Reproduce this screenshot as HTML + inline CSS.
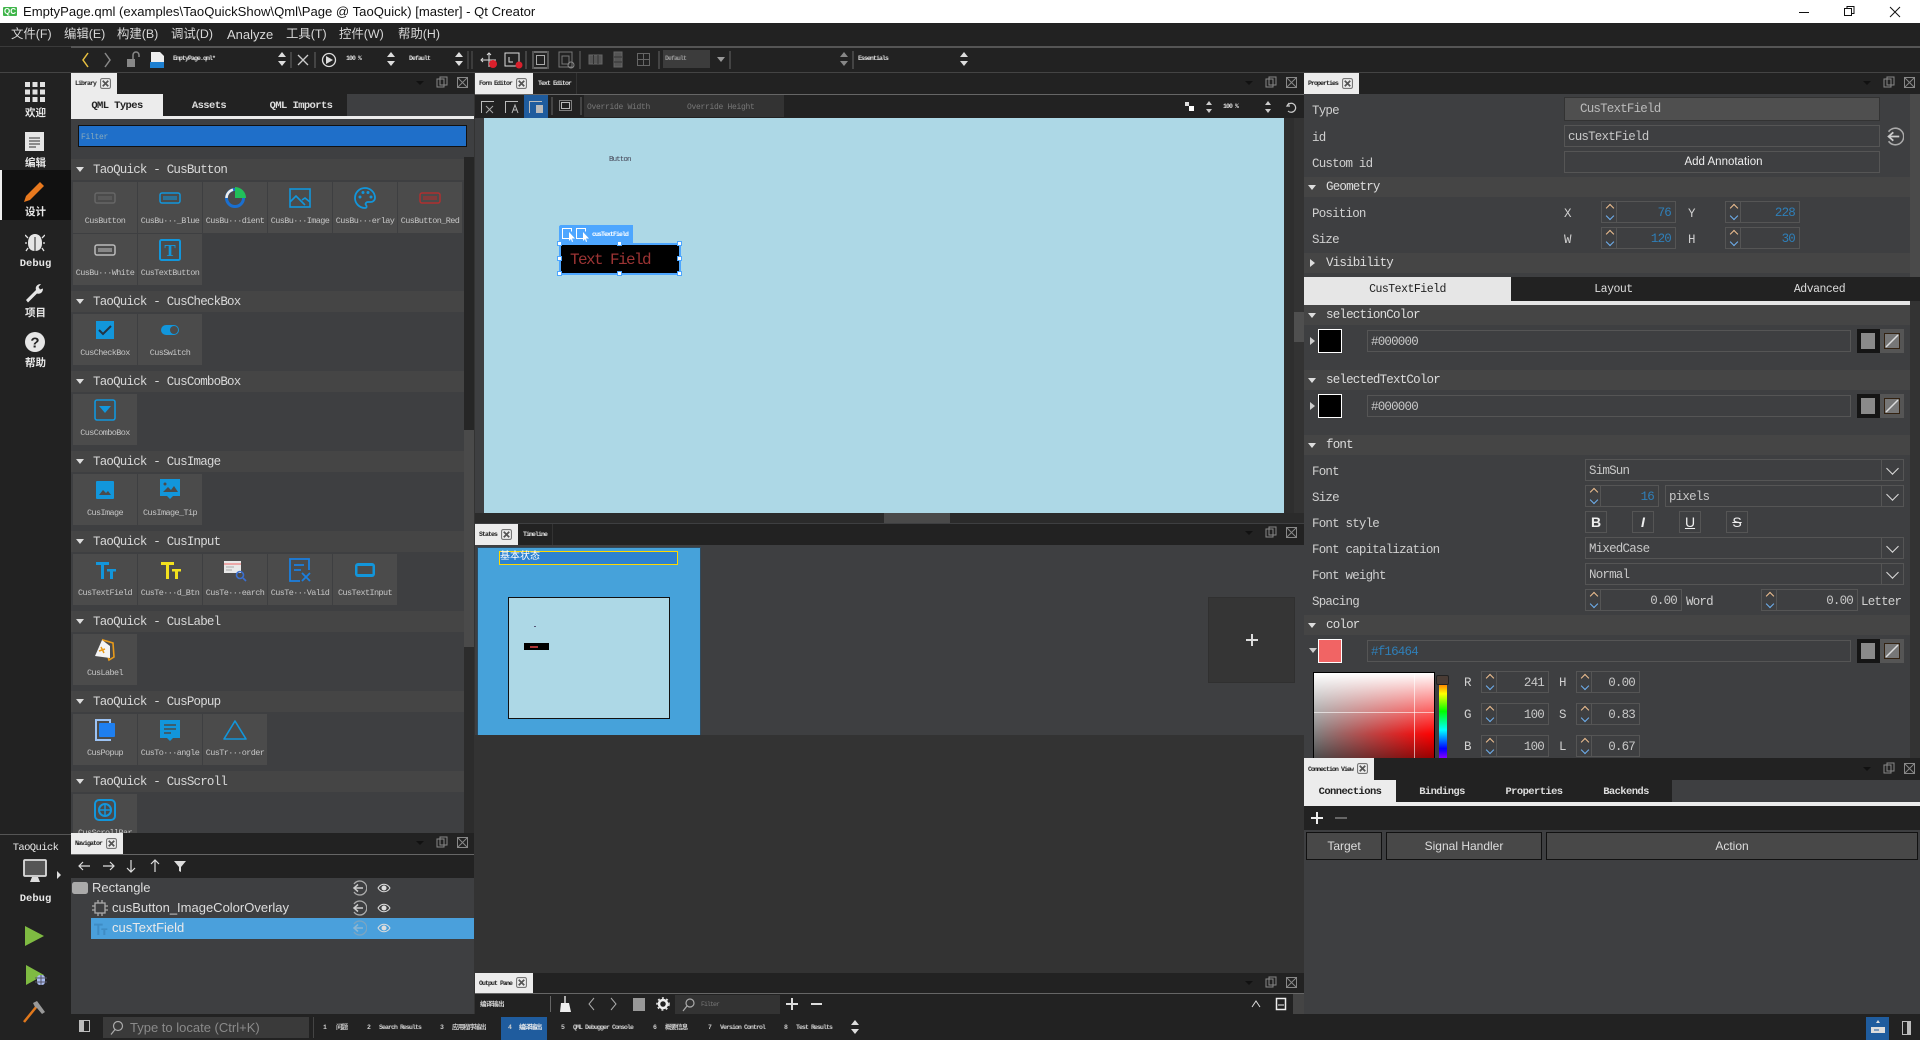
<!DOCTYPE html>
<html lang="en"><head><meta charset="utf-8"><title>EmptyPage.qml - Qt Creator</title>
<style>
html,body{margin:0;padding:0;width:1920px;height:1040px;overflow:hidden;background:#3e3f41}
body{position:relative;font-family:"Liberation Sans","Noto Sans CJK SC",sans-serif;color:#ddd}
div,span,svg,b,i{box-sizing:border-box}
.a{position:absolute;display:block}
.t{position:absolute;white-space:nowrap}
.m{font-family:"Liberation Mono","Noto Serif CJK SC",monospace}
.tab{position:absolute;background:#ececec;color:#222;font:bold 6.5px/22px "Liberation Mono","Noto Sans CJK SC",monospace;letter-spacing:-.9px;padding-left:4px;white-space:nowrap;overflow:hidden}
.tiny{position:absolute;color:#ddd;font:bold 6.5px/12px "Liberation Mono","Noto Sans CJK SC",monospace;letter-spacing:-.9px;white-space:nowrap}
.h{position:absolute;left:71px;width:393px;height:21px;background:#454545;color:#d8d8d8;font:12.5px/22px "Liberation Mono",monospace;letter-spacing:-.8px;padding-left:22px;white-space:nowrap}
.h:before,.p:before{content:"";position:absolute;left:5px;top:8px;border:4px solid transparent;border-top:5px solid #ddd;border-bottom:0;width:0;height:0}
.p{position:absolute;left:1304px;width:606px;height:20px;background:#454545;color:#ddd;font:12.5px/21px "Liberation Mono",monospace;letter-spacing:-.8px;padding-left:22px;white-space:nowrap}
.p:before{left:4px;top:8px}
.p.cl:before{border:4px solid transparent;border-left:5px solid #ddd;border-right:0;top:6px;left:6px}
.c{position:absolute;width:64px;height:51px;background:#4b4b4b;overflow:hidden}
.c svg{position:absolute;left:20px;top:4px;width:24px;height:24px}
.c b{position:absolute;left:-4px;right:-4px;top:33px;text-align:center;font:normal 8.5px/12px "Liberation Mono",monospace;letter-spacing:-.6px;color:#c6c6c6;white-space:nowrap}
.l{position:absolute;left:1312px;margin-top:1px;font:12.5px/16px "Liberation Mono",monospace;letter-spacing:-.8px;color:#d0d0d0;white-space:nowrap}
.f{position:absolute;border:1px solid #555;font:12.5px/22px "Liberation Mono",monospace;letter-spacing:-.8px;color:#c8c8c8;padding-left:3px;white-space:nowrap}
.sp{position:absolute;border:1px solid #555;height:22px;font:12.5px/22px "Liberation Mono",monospace;letter-spacing:-.8px;color:#c8c8c8;text-align:right;padding-right:4px}
.sp i{position:absolute;left:0;top:0;width:15px;height:20px;border-right:1px solid #555}
.sp i:before,.sp i:after{content:"";position:absolute;left:5px;width:5px;height:5px;transform:rotate(45deg)}
.sp i:before{top:3px;border-left:1px solid #f0c090;border-top:1px solid #f0c090}
.sp i:after{top:11px;border-right:1px solid #6fb0f0;border-bottom:1px solid #6fb0f0}
.bl{color:#2f7fb8}
.cb:after{content:"";position:absolute;right:21px;top:0;height:20px;border-left:1px solid #555}
.cb:before{content:"";position:absolute;right:6px;top:4px;width:8px;height:8px;border-right:1px solid #ddd;border-bottom:1px solid #ddd;transform:rotate(45deg)}
.btn{position:absolute;background:#484848;border:1px solid #111;color:#ddd;text-align:center;font:12px/26px "Liberation Sans",sans-serif}
.sw{position:absolute;left:1318px;width:24px;height:24px;border:1px solid #fff;background:#000}
.bb{position:absolute;left:1857px;width:23px;height:24px;background:#151515}
.bb:before{content:"";position:absolute;left:4px;top:4px;width:14px;height:16px;background:#8a8a8a}
.bs{position:absolute;left:1880px;width:24px;height:24px;background:#555}
.bs svg{position:absolute;left:4px;top:4px}
.fs{position:absolute;top:511px;width:22px;height:22px;border:1px solid #555;text-align:center;font:bold 14px/20px "Liberation Sans",sans-serif;color:#eee}
.vs{position:absolute;width:1px;background:#555}
.menu{position:absolute;top:25px;font-size:12.4px;line-height:19px;color:#d8d8d8;white-space:nowrap}
.side{position:absolute;left:0;width:71px;text-align:center;color:#e8e8e8;font:bold 10.5px/13px "Liberation Mono","Noto Sans CJK SC",monospace}
.tb{position:absolute;top:94px;height:22px;font:bold 10.5px/24px "Liberation Mono",monospace;letter-spacing:-.6px;text-align:center;color:#ddd;background:#222}
.st{position:absolute;top:1023px;color:#ccc;font:bold 6.5px/10px "Liberation Mono","Noto Sans CJK SC",monospace;letter-spacing:-.9px;white-space:nowrap}
.hd{position:absolute;width:5px;height:5px;background:#fff;border:1px solid #4da6ff}
</style></head>
<body>
<svg width="0" height="0" style="position:absolute">
<defs>
<symbol id="x" viewBox="0 0 10 10"><rect x=".5" y=".5" width="9" height="9" rx="1.5" fill="none" stroke="#777"/><path d="M2.5 2.5l5 5M7.5 2.5l-5 5" stroke="#555" stroke-width="1.6"/></symbol>
<symbol id="pc" viewBox="0 0 52 14"><path d="M0 5h8l-4 4z" fill="#111"/><rect x="21" y="3" width="7" height="8" fill="none" stroke="#888"/><rect x="24" y="1" width="7" height="8" fill="none" stroke="#888"/><rect x="41.500" y="1.500" width="10" height="10" fill="none" stroke="#888"/><path d="M42 2l9 9M51 2l-9 9" stroke="#888"/></symbol>
<symbol id="ud" viewBox="0 0 10 14"><path d="M5 0l4 5H1zM5 14l4-5H1z" fill="#ddd"/></symbol>
<symbol id="eye" viewBox="0 0 14 10"><path d="M1 5c3-5 9-5 12 0-3 5-9 5-12 0z" fill="none" stroke="#ddd"/><circle cx="7" cy="5" r="2.500" fill="#ddd"/></symbol>
<symbol id="bk" viewBox="0 0 16 16"><path d="M3 4a7 7 0 1 1 0 8" fill="none" stroke="#aaa" stroke-width="1.300"/><path d="M12 8H3M7 4.500L3 8l4 3.500" fill="none" stroke="#ccc" stroke-width="1.500"/></symbol>
<symbol id="btn" viewBox="0 0 24 24"><rect x="2" y="7" width="20" height="10" rx="2" fill="none" stroke="currentColor" stroke-width="1.500"/><rect x="5" y="10" width="14" height="4" fill="currentColor" opacity=".55"/></symbol>
<symbol id="tt" viewBox="0 0 24 24"><path d="M3 4h13v3h-5v14H8V7H3zM14 11h9v2.500h-3V21h-3v-7.500h-3z" fill="currentColor"/></symbol>
</defs></svg>

<!-- title bar -->
<div class="a" style="left:0;top:0;width:1920px;height:23px;background:#fff"></div>
<div class="a" style="left:3px;top:7px;width:14px;height:9px;background:#3fb54a;border-radius:1px;color:#fff;font:bold 8px/9px 'Liberation Sans',sans-serif;text-align:center">QC</div>
<div class="t" style="left:23px;top:3px;font-size:13.1px;line-height:17px;color:#111">EmptyPage.qml (examples\TaoQuickShow\Qml\Page @ TaoQuick) [master] - Qt Creator</div>
<svg class="a" style="left:1795px;top:4px" width="115" height="16"><path d="M4 8.500h10" stroke="#111"/><rect x="49.500" y="4.500" width="7" height="7" fill="#fff" stroke="#111"/><path d="M52 4V2.500h7v7h-2" fill="none" stroke="#111"/><path d="M95 3l10 10M105 3l-10 10" stroke="#111"/></svg>

<!-- menu -->
<div class="a" style="left:0;top:23px;width:1920px;height:49px;background:#222"></div>
<span class="menu" style="left:11px">文件(F)</span><span class="menu" style="left:64px">编辑(E)</span><span class="menu" style="left:117px">构建(B)</span><span class="menu" style="left:171px">调试(D)</span><span class="menu" style="left:227px;font-size:13px">Analyze</span><span class="menu" style="left:286px">工具(T)</span><span class="menu" style="left:339px">控件(W)</span><span class="menu" style="left:398px">帮助(H)</span>
<div class="a" style="left:71px;top:46px;width:1849px;height:2px;background:#555"></div>
<div class="a" style="left:0;top:46px;width:71px;height:1px;background:#3a3a3a"></div>

<!-- main toolbar -->
<svg class="a" style="left:71px;top:48px" width="900" height="24" fill="none">
<path d="M17 5l-5 7 5 7" stroke="#e8c040" stroke-width="1.500"/><path d="M34 5l5 7-5 7" stroke="#888" stroke-width="1.500"/>
<rect x="56" y="11" width="8" height="8" fill="#888"/><path d="M62 11V7a3 3 0 0 1 6 0v2" stroke="#888" stroke-width="1.500"/>
<path d="M80 4h9l4 4v8H80z" fill="#eee"/><rect x="79" y="14" width="14" height="6" fill="#1d7fd0"/>
<path d="M220 4v16M244 4v16" stroke="#666"/><path d="M227 7l10 10M237 7l-10 10" stroke="#ccc" stroke-width="1.300"/>
<circle cx="258" cy="12" r="6.500" stroke="#ddd" stroke-width="1.300"/><path d="M255 8l7 4-7 4z" fill="#ddd"/>
<path d="M397 3v18M401 3v18" stroke="#555"/>
<path d="M411 12h14M418 5v14M412 10l-2 2 2 2M416 7l2-2 2 2" stroke="#ddd"/><circle cx="422" cy="16" r="4" fill="#d9202c"/>
<path d="M434 5h14v13h-14z" stroke="#ddd"/><path d="M438 9v5h4" stroke="#ddd"/><circle cx="448" cy="17" r="3.500" fill="#d9202c"/>
<path d="M455 3v18" stroke="#666"/><path d="M463 4h13M463 20h13" stroke="#bbb"/><rect x="465.500" y="7.500" width="8" height="9" stroke="#aaa"/><path d="M462 3v18M477 3v18" stroke="#888"/>
<rect x="488" y="4" width="13" height="15" stroke="#777"/><rect x="491" y="8" width="7" height="8" stroke="#777"/><circle cx="500" cy="17" r="3" stroke="#888"/>
<path d="M509 3v18" stroke="#666"/>
<rect x="518" y="7" width="13" height="9" stroke="#666" fill="#555"/><path d="M522.500 7v9M527 7v9" stroke="#333"/>
<rect x="543" y="4" width="8" height="15" stroke="#666" fill="#555"/><path d="M543 9h8M543 14h8" stroke="#333"/>
<rect x="566.500" y="5.500" width="12" height="12" stroke="#666"/><path d="M566.500 11.500h12M572.500 5.500v12" stroke="#666"/>
<path d="M588 3v18M659 3v18M782 3v18M901 3v18" stroke="#666"/>
</svg>
<div class="a" style="left:663px;top:50px;width:47px;height:18px;background:#3c3c3c"></div>
<div class="a" style="left:717px;top:57px;border:4px solid transparent;border-top:5px solid #999;border-bottom:0"></div>
<div class="tiny" style="left:173px;top:53px">EmptyPage.qml*</div>
<div class="tiny" style="left:346px;top:53px">100 %</div>
<div class="tiny" style="left:409px;top:53px">Default</div>
<div class="tiny" style="left:665px;top:53px;color:#999">Default</div>
<div class="tiny" style="left:858px;top:53px">Essentials</div>
<svg class="a" style="left:277px;top:52px" width="10" height="14"><use href="#ud"/></svg>
<svg class="a" style="left:386px;top:52px" width="10" height="14"><use href="#ud"/></svg>
<svg class="a" style="left:454px;top:52px" width="10" height="14"><use href="#ud"/></svg>
<svg class="a" style="left:839px;top:52px;opacity:.55" width="10" height="14"><use href="#ud"/></svg>
<svg class="a" style="left:959px;top:52px" width="10" height="14"><use href="#ud"/></svg>

<!-- bars under toolbar -->
<div class="a" style="left:0;top:72px;width:1920px;height:1px;background:#444"></div>
<div class="a" style="left:71px;top:73px;width:1849px;height:21px;background:#222"></div>

<!-- left sidebar -->
<div class="a" style="left:0;top:73px;width:71px;height:967px;background:#222"></div>
<div class="a" style="left:0;top:170px;width:71px;height:50px;background:#111"></div>
<div class="a" style="left:0;top:170px;width:2px;height:50px;background:#eee"></div>
<svg class="a" style="left:25px;top:82px" width="20" height="20" fill="#e2e2e2"><rect width="5" height="5"/><rect x="7.500" width="5" height="5"/><rect x="15" width="5" height="5"/><rect y="7.500" width="5" height="5"/><rect x="7.500" y="7.500" width="5" height="5"/><rect x="15" y="7.500" width="5" height="5"/><rect y="15" width="5" height="5"/><rect x="7.500" y="15" width="5" height="5"/><rect x="15" y="15" width="5" height="5"/></svg>
<div class="side" style="top:106px;margin-top:2px">欢迎</div>
<svg class="a" style="left:25px;top:132px" width="20" height="20"><rect width="19" height="19" fill="#e6e6e6"/><path d="M4 6h11M4 9h11M4 12h11M4 15h7" stroke="#333"/></svg>
<div class="side" style="top:156px;margin-top:2px">编辑</div>
<svg class="a" style="left:23px;top:181px" width="22" height="22"><path d="M17 1l4 4L7 19l-6 2 2-6z" fill="#e8791e"/></svg>
<div class="side" style="top:206px;margin-top:1px">设计</div>
<svg class="a" style="left:25px;top:232px" width="20" height="20"><path d="M10 2c4 0 7 3 7 9s-3 8-7 8-7-2-7-8 3-9 7-9z" fill="#e6e6e6"/><path d="M10 2v17M3 6L0 3M17 6l3-3M2 11H0M18 11h2M3 16l-2 3M17 16l2 3" stroke="#e6e6e6" stroke-width="1.300"/><path d="M10 5v14" stroke="#222"/></svg>
<div class="side" style="top:256px;margin-top:2px">Debug</div>
<svg class="a" style="left:25px;top:283px" width="20" height="20"><path d="M1 17l10-10c-1-3 1-6 5-6l-2.500 3 1.500 2.500 3-1c0 4-3 6-6 5L3 19.500z" fill="#e6e6e6"/></svg>
<div class="side" style="top:306px;margin-top:2px">项目</div>
<svg class="a" style="left:25px;top:332px" width="20" height="20"><circle cx="10" cy="10" r="10" fill="#e6e6e6"/><text x="10" y="15.500" text-anchor="middle" font-family="Liberation Sans" font-weight="bold" font-size="15" fill="#222">?</text></svg>
<div class="side" style="top:356px;margin-top:2px">帮助</div>
<div class="a" style="left:0;top:834px;width:71px;height:1px;background:#555"></div>
<div class="side" style="top:842px;font-weight:normal;font-size:10.5px;letter-spacing:-.6px">TaoQuick</div>
<svg class="a" style="left:23px;top:859px" width="40" height="26"><rect x="1" y="1" width="22" height="16" rx="1" fill="#555" stroke="#ddd" stroke-width="1.800"/><path d="M9 18h6l2 5H7z" fill="#ddd"/><path d="M34 12l4 4-4 4z" fill="#ddd"/></svg>
<div class="side" style="top:893px">Debug</div>
<svg class="a" style="left:24px;top:925px" width="22" height="22"><path d="M1 1l19 10L1 21z" fill="#7fbb42"/></svg>
<svg class="a" style="left:24px;top:964px" width="24" height="24"><path d="M2 1l18 10L2 21z" fill="#7fbb42"/><rect x="13" y="11" width="8" height="10" rx="3" fill="#aabbee"/><path d="M17 11v10M11 14h12M11 18h12" stroke="#556"/></svg>
<svg class="a" style="left:22px;top:1000px" width="24" height="24"><path d="M2 22L15 6" stroke="#e0781c" stroke-width="2.500"/><path d="M11 3l4-2 8 11-3 2-5-6-2-1z" fill="#999"/></svg>

<!-- library panel -->
<div class="tab" style="left:71px;top:73px;width:46px">Library</div>
<svg class="a" style="left:100px;top:78px" width="11" height="11"><use href="#x"/></svg>
<svg class="a" style="left:416px;top:76px" width="52" height="14"><use href="#pc"/></svg>
<div class="a" style="left:71px;top:94px;width:403px;height:739px;background:#3e3f41"></div>
<div class="tb" style="left:71px;width:92px;background:#ececec;color:#222">QML Types</div>
<div class="tb" style="left:163px;width:92px">Assets</div>
<div class="tb" style="left:255px;width:92px">QML Imports</div>
<div class="a" style="left:71px;top:116px;width:403px;height:3px;background:#ececec"></div>
<div class="a m" style="left:78px;top:125px;width:389px;height:22px;background:#1f6fc9;border:1px solid #111;font-size:8px;line-height:24px;letter-spacing:-.3px;color:#8ab;padding-left:2px">Filter</div>
<div class="a" style="left:464px;top:157px;width:10px;height:273px;background:#262626"></div>
<div class="a" style="left:464px;top:430px;width:10px;height:217px;background:#4a4a4a"></div>
<div class="a" style="left:464px;top:647px;width:10px;height:186px;background:#2c2c2c"></div>

<div class="h" style="top:159px">TaoQuick - CusButton</div>
<div class="c" style="left:73px;top:182px;color:#666"><svg><use href="#btn"/></svg><b>CusButton</b></div>
<div class="c" style="left:138px;top:182px;color:#1296db"><svg><use href="#btn"/></svg><b>CusBu···_Blue</b></div>
<div class="c" style="left:203px;top:182px"><svg viewBox="0 0 24 24"><circle cx="12" cy="12" r="8.500" fill="none" stroke="#1a6fd0" stroke-width="3"/><path d="M3.500 12A8.500 8.500 0 0 1 10 3.700" fill="none" stroke="#eee" stroke-width="2.500"/><path d="M12 1a11 11 0 0 1 11 11H12z" fill="#22c05a"/></svg><b>CusBu···dient</b></div>
<div class="c" style="left:268px;top:182px"><svg viewBox="0 0 24 24" fill="none" stroke="#1296db" stroke-width="1.600"><rect x="2" y="3" width="20" height="18"/><path d="M2 16l6-6 9 9M14 14l3-2 5 4"/></svg><b>CusBu···Image</b></div>
<div class="c" style="left:333px;top:182px"><svg viewBox="0 0 24 24"><path d="M12 2a10 10 0 1 0 0 20c2 0 2-2 1-3s0-3 2-3h3c2 0 4-2 4-4 0-6-5-10-10-10z" fill="none" stroke="#1296db" stroke-width="1.800"/><circle cx="7" cy="11" r="1.500" fill="#1296db"/><circle cx="10" cy="6.500" r="1.500" fill="#1296db"/><circle cx="15" cy="6.500" r="1.500" fill="#1296db"/><circle cx="18" cy="11" r="1.500" fill="#1296db"/></svg><b>CusBu···erlay</b></div>
<div class="c" style="left:398px;top:182px;color:#b03030"><svg><use href="#btn"/></svg><b>CusButton_Red</b></div>
<div class="c" style="left:73px;top:234px;color:#bbb"><svg><use href="#btn"/></svg><b>CusBu···White</b></div>
<div class="c" style="left:138px;top:234px"><svg viewBox="0 0 24 24"><rect x="2" y="2" width="20" height="20" rx="1.500" fill="none" stroke="#1296db" stroke-width="2"/><text x="12" y="18" text-anchor="middle" font-family="Liberation Serif" font-weight="bold" font-size="17" fill="#1296db">T</text></svg><b>CusTextButton</b></div>

<div class="h" style="top:291px">TaoQuick - CusCheckBox</div>
<div class="c" style="left:73px;top:314px"><svg viewBox="0 0 24 24"><rect x="3" y="3" width="18" height="18" fill="#1296db"/><path d="M6 12l4 4 8-8" fill="none" stroke="#234" stroke-width="2"/></svg><b>CusCheckBox</b></div>
<div class="c" style="left:138px;top:314px"><svg viewBox="0 0 24 24"><rect x="3" y="7" width="18" height="10" rx="5" fill="#1296db"/><circle cx="16" cy="12" r="4" fill="#4b4b4b"/></svg><b>CusSwitch</b></div>

<div class="h" style="top:371px">TaoQuick - CusComboBox</div>
<div class="c" style="left:73px;top:394px"><svg viewBox="0 0 24 24"><rect x="2" y="2" width="20" height="20" rx="2" fill="none" stroke="#1296db" stroke-width="1.600"/><path d="M6 8h12l-6 7z" fill="#1296db"/></svg><b>CusComboBox</b></div>

<div class="h" style="top:451px">TaoQuick - CusImage</div>
<div class="c" style="left:73px;top:474px"><svg viewBox="0 0 24 24"><rect x="3" y="3" width="18" height="18" rx="1" fill="#1296db"/><path d="M6 17l4-5 3 3 2-2 3 4z" fill="#4b4b4b"/></svg><b>CusImage</b></div>
<div class="c" style="left:138px;top:474px"><svg viewBox="0 0 24 24"><path d="M2 1h20v17h-7l-3 3-3-3H2z" fill="#1296db"/><path d="M5 14l5-5 3 3 3-4 4 6z" fill="#4b4b4b"/><circle cx="7" cy="6" r="1.500" fill="#4b4b4b"/></svg><b>CusImage_Tip</b></div>

<div class="h" style="top:531px">TaoQuick - CusInput</div>
<div class="c" style="left:73px;top:554px;color:#1296db"><svg><use href="#tt"/></svg><b>CusTextField</b></div>
<div class="c" style="left:138px;top:554px;color:#f2e01e"><svg><use href="#tt"/></svg><b>CusTe···d_Btn</b></div>
<div class="c" style="left:203px;top:554px"><svg viewBox="0 0 24 24"><rect x="1" y="3" width="17" height="12" fill="#e8e8e8"/><path d="M1 6h17" stroke="#e66"/><path d="M3 9h8M3 12h6" stroke="#aaa"/><circle cx="17" cy="17" r="3.500" fill="none" stroke="#3a6fd0" stroke-width="1.600"/><path d="M20 20l3 3" stroke="#3a6fd0" stroke-width="1.600"/></svg><b>CusTe···earch</b></div>
<div class="c" style="left:268px;top:554px"><svg viewBox="0 0 24 24" fill="none" stroke="#1a7fe0" stroke-width="1.800"><path d="M21 12V1H2v22h10"/><path d="M6 7h10M6 12h7"/><path d="M14 15l8 8M22 15l-8 8"/></svg><b>CusTe···Valid</b></div>
<div class="c" style="left:333px;top:554px"><svg viewBox="0 0 24 24"><rect x="2" y="5" width="20" height="14" rx="3" fill="#1296db"/><rect x="4.500" y="8" width="15" height="8" fill="#4b4b4b"/></svg><b>CusTextInput</b></div>

<div class="h" style="top:611px">TaoQuick - CusLabel</div>
<div class="c" style="left:73px;top:634px"><svg viewBox="0 0 24 24"><path d="M10 2l10 3 1 14-5 3z" fill="none" stroke="#e89a1a" stroke-width="1.600"/><path d="M9 2l8 6v12L2 18z" fill="#f4f4f4"/><path d="M6 13l6-2M8 9l3 6" stroke="#e89a1a" stroke-width="1.500"/></svg><b>CusLabel</b></div>

<div class="h" style="top:691px">TaoQuick - CusPopup</div>
<div class="c" style="left:73px;top:714px"><svg viewBox="0 0 24 24"><path d="M17 5V2H3v20h15" fill="none" stroke="#9cc3f5" stroke-width="2"/><rect x="6" y="5" width="16" height="14" rx="1" fill="#1e7ff0"/></svg><b>CusPopup</b></div>
<div class="c" style="left:138px;top:714px"><svg viewBox="0 0 24 24"><path d="M2 2h20v18h-7l-3 3-3-3H2z" fill="#1296db"/><path d="M6 7h12M6 11h12M6 15h7" stroke="#4b4b4b" stroke-width="1.600"/></svg><b>CusTo···angle</b></div>
<div class="c" style="left:203px;top:714px"><svg viewBox="0 0 24 24"><path d="M12 3L23 21H1z" fill="none" stroke="#1296db" stroke-width="1.600" stroke-linejoin="round"/></svg><b>CusTr···order</b></div>

<div class="h" style="top:771px">TaoQuick - CusScroll</div>
<div class="a" style="left:71px;top:794px;width:393px;height:39px;overflow:hidden"><div class="c" style="left:2px;top:0"><svg viewBox="0 0 24 24"><rect x="2" y="2" width="20" height="20" rx="4" fill="none" stroke="#1296db" stroke-width="2"/><circle cx="12" cy="12" r="6" fill="none" stroke="#1296db" stroke-width="2"/><path d="M12 6v12M6 12h12" stroke="#1296db" stroke-width="1.500"/></svg><b>CusScrollBar</b></div></div>

<!-- navigator -->
<div class="a" style="left:71px;top:833px;width:403px;height:21px;background:#222"></div>
<div class="tab" style="left:71px;top:833px;width:52px">Navigator</div>
<svg class="a" style="left:106px;top:838px" width="11" height="11"><use href="#x"/></svg>
<svg class="a" style="left:416px;top:836px" width="52" height="14"><use href="#pc"/></svg>
<div class="a" style="left:71px;top:854px;width:403px;height:1px;background:#666"></div>
<div class="a" style="left:71px;top:855px;width:403px;height:23px;background:#222"></div>
<svg class="a" style="left:71px;top:857px" width="130" height="20" fill="none" stroke="#ddd" stroke-width="1.200"><path d="M19 9H8M12 5L8 9l4 4M32 9h11M39 5l4 4-4 4M60 3v12M56 11l4 4 4-4M84 15V3M80 7l4-4 4 4"/><path d="M103 4h12l-5 6v5l-2-1v-4z" fill="#ddd" stroke="none"/></svg>
<svg class="a" style="left:72px;top:882px" width="17" height="12"><rect width="16" height="12" rx="2.500" fill="#aaa"/></svg>
<div class="t" style="left:92px;top:879px;font-size:13px;line-height:18px;color:#ddd">Rectangle</div>
<svg class="a" style="left:92px;top:900px" width="16" height="16" fill="none" stroke="#aaa" stroke-width="1.300"><rect x="3" y="3" width="10" height="10"/><path d="M6 0v3M10 0v3M6 13v3M10 13v3M0 6h3M0 10h3M13 6h3M13 10h3"/></svg>
<div class="t" style="left:112px;top:899px;font-size:13px;line-height:18px;color:#ddd">cusButton_ImageColorOverlay</div>
<div class="a" style="left:91px;top:918px;width:383px;height:21px;background:#4aa0dc"></div>
<svg class="a" style="left:92px;top:921px;color:#3f8cc4" width="16" height="16"><use href="#tt"/></svg>
<div class="t" style="left:112px;top:919px;font-size:13px;line-height:18px;color:#eaeaea">cusTextField</div>
<svg class="a" style="left:351px;top:880px" width="16" height="16"><use href="#bk"/></svg><svg class="a" style="left:351px;top:900px" width="16" height="16"><use href="#bk"/></svg><svg class="a" style="left:351px;top:920px;opacity:.5" width="16" height="16"><use href="#bk"/></svg>
<svg class="a" style="left:377px;top:883px" width="14" height="10"><use href="#eye"/></svg><svg class="a" style="left:377px;top:903px" width="14" height="10"><use href="#eye"/></svg><svg class="a" style="left:377px;top:923px" width="14" height="10"><use href="#eye"/></svg>

<!-- center: form editor -->
<div class="a" style="left:474px;top:73px;width:1px;height:941px;background:#333"></div>
<div class="tab" style="left:475px;top:73px;width:58px">Form Editor</div>
<svg class="a" style="left:516px;top:78px" width="11" height="11"><use href="#x"/></svg>
<div class="tiny" style="left:538px;top:78px">Text Editor</div>
<div class="vs" style="left:576px;top:73px;height:21px;background:#333"></div>
<svg class="a" style="left:1245px;top:76px" width="52" height="14"><use href="#pc"/></svg>
<div class="a" style="left:475px;top:94px;width:829px;height:1px;background:#666"></div>
<div class="a" style="left:475px;top:95px;width:829px;height:23px;background:#222"></div>
<div class="a" style="left:524px;top:95px;width:24px;height:23px;background:#1f5c9e"></div>
<svg class="a" style="left:475px;top:94px" width="110" height="23" fill="none" stroke="#bbb"><path d="M6.500 19V7.500H19M30.500 19V7.500H43M54.500 19V7.500H67" /><path d="M11 12l7 7M18 12l-7 7" stroke="#aaa"/><path d="M37 19l3-8 3 8M38 16h4"/><rect x="61" y="11" width="7" height="8" fill="#bbb" stroke="none"/><path d="M77 3v18M106 3v18" stroke="#666"/><rect x="84.500" y="6.500" width="12" height="10" stroke="#ddd" stroke-dasharray="1 1"/><rect x="86.500" y="8.500" width="8" height="6"/></svg>
<div class="a" style="left:584px;top:95px;width:200px;height:22px;background:#333"></div>
<div class="t m" style="left:587px;top:102px;font-size:8px;line-height:11px;letter-spacing:-.3px;color:#777">Override Width</div>
<div class="t m" style="left:687px;top:102px;font-size:8px;line-height:11px;letter-spacing:-.3px;color:#777">Override Height</div>
<svg class="a" style="left:1183px;top:100px" width="115" height="14" fill="none"><rect x="6" y="6" width="5" height="5" fill="#fff"/><rect x="2" y="2" width="4" height="4" fill="#ddd"/><path d="M26 1l3 4h-6zM26 13l3-4h-6zM85 1l3 4h-6zM85 13l3-4h-6z" fill="#ccc"/><path d="M106 3l-2 3h3M104 6a4.500 4.500 0 1 1 1 5" stroke="#ccc" stroke-width="1.200"/></svg>
<div class="tiny" style="left:1223px;top:101px">100 %</div>
<div class="a" style="left:475px;top:118px;width:9px;height:395px;background:#3e3f41"></div>
<div class="a" style="left:484px;top:118px;width:800px;height:395px;background:#add8e6"></div>
<div class="a" style="left:1284px;top:118px;width:10px;height:395px;background:#2e2e2e"></div>
<div class="a" style="left:1294px;top:118px;width:10px;height:395px;background:#333"></div>
<div class="a" style="left:1294px;top:312px;width:10px;height:30px;background:#4f4f4f"></div>
<div class="a" style="left:475px;top:513px;width:829px;height:10px;background:#2b2b2b"></div>
<div class="a" style="left:884px;top:513px;width:66px;height:10px;background:#4a4a4a"></div>
<div class="t m" style="left:609px;top:155px;font-size:7.5px;line-height:10px;color:#445;letter-spacing:-.9px">Button</div>
<div class="a" style="left:559px;top:225px;width:74px;height:20px;background:#4da6ff;clip-path:polygon(2% 0,100% 0,100% 100%,0 100%,0 6%)"></div>
<svg class="a" style="left:562px;top:228px" width="32" height="15" fill="none" stroke="#fff"><path d="M9 10.500H.5V.500h9v3M23 10.500h-8.500V.500h9v3"/><path d="M7 4v9l2-2 1 3 1-.5-1-3h3zM21 4v9l2-2 1 3 1-.5-1-3h3z" fill="#fff" stroke="none"/></svg>
<div class="tiny" style="left:592px;top:229px;color:#fff">cusTextField</div>
<div class="a" style="left:559px;top:243px;width:122px;height:32px;background:#000;border:2px solid #4da6ff"></div>
<div class="t m" style="left:570px;top:251px;font-size:16px;line-height:18px;letter-spacing:-1.6px;color:#9c3434">Text Field</div>
<div class="hd" style="left:557px;top:241px"></div>
<div class="hd" style="left:617px;top:241px"></div>
<div class="hd" style="left:677px;top:241px"></div>
<div class="hd" style="left:557px;top:256px"></div>
<div class="hd" style="left:677px;top:256px"></div>
<div class="hd" style="left:557px;top:271px"></div>
<div class="hd" style="left:617px;top:271px"></div>
<div class="hd" style="left:677px;top:271px"></div>

<!-- states -->
<div class="a" style="left:475px;top:524px;width:829px;height:21px;background:#222"></div>
<div class="tab" style="left:475px;top:524px;width:43px">States</div>
<svg class="a" style="left:501px;top:529px" width="11" height="11"><use href="#x"/></svg>
<div class="tiny" style="left:523px;top:529px">Timeline</div>
<div class="vs" style="left:552px;top:524px;height:21px;background:#333"></div>
<svg class="a" style="left:1245px;top:526px" width="52" height="14"><use href="#pc"/></svg>
<div class="a" style="left:475px;top:545px;width:829px;height:190px;background:#3e3f41"></div>
<div class="a" style="left:477px;top:547px;width:224px;height:189px;background:#46a2da;border:1px solid #2f4a5e"></div>
<div class="a" style="left:499px;top:551px;width:179px;height:14px;background:#2d82d0;border:1px solid #ffd800"></div>
<div class="t" style="left:500px;top:550px;font:10px/10px 'Noto Sans CJK SC',sans-serif;color:#fff">基本状态</div>
<div class="a" style="left:508px;top:597px;width:162px;height:122px;background:#add8e6;border:1px solid #111"></div>
<div class="a" style="left:534px;top:626px;width:2px;height:1px;background:#557"></div>
<div class="a" style="left:524px;top:643px;width:25px;height:7px;background:#000"></div>
<div class="a" style="left:530px;top:646px;width:8px;height:2px;background:#a33"></div>
<div class="a" style="left:1208px;top:597px;width:87px;height:86px;background:#353535;border:1px solid #303030"></div>
<svg class="a" style="left:1245px;top:633px" width="14" height="14"><path d="M7 1v12M1 7h12" stroke="#ddd" stroke-width="2"/></svg>
<div class="a" style="left:475px;top:735px;width:829px;height:238px;background:#333"></div>

<!-- output pane -->
<div class="a" style="left:475px;top:973px;width:829px;height:20px;background:#222"></div>
<div class="tab" style="left:475px;top:973px;width:58px;line-height:21px">Output Pane</div>
<svg class="a" style="left:516px;top:977px" width="11" height="11"><use href="#x"/></svg>
<svg class="a" style="left:1245px;top:976px" width="52" height="14"><use href="#pc"/></svg>
<div class="a" style="left:475px;top:993px;width:829px;height:1px;background:#666"></div>
<div class="a" style="left:475px;top:994px;width:818px;height:20px;background:#222"></div>
<div class="a" style="left:1293px;top:994px;width:11px;height:20px;background:#444"></div>
<div class="tiny" style="left:480px;top:999px;letter-spacing:-.5px">编译输出</div>
<div class="vs" style="left:550px;top:996px;height:16px;background:#666"></div>
<svg class="a" style="left:558px;top:995px" width="115" height="18"><path d="M7 1v7" stroke="#ddd" stroke-width="1.500"/><path d="M3 8h8l2 9H2z" fill="#eee"/><path d="M36 3l-5 6 5 6M53 3l5 6-5 6" fill="none" stroke="#aaa"/><rect x="75" y="3" width="12" height="13" fill="#999"/><circle cx="105" cy="9" r="4" fill="none" stroke="#eee" stroke-width="2.500"/><circle cx="105" cy="9" r="6" fill="none" stroke="#eee" stroke-width="1.500" stroke-dasharray="2 2.500"/></svg>
<div class="a" style="left:675px;top:995px;width:105px;height:19px;background:#333"></div>
<svg class="a" style="left:682px;top:997px" width="14" height="15" fill="none" stroke="#aaa" stroke-width="1.200"><circle cx="8" cy="6" r="4"/><path d="M5 9l-4 5"/></svg>
<div class="tiny" style="left:701px;top:999px;color:#777;font-weight:normal">Filter</div>
<svg class="a" style="left:785px;top:997px" width="40" height="14" stroke="#ddd" stroke-width="2"><path d="M7 1v12M1 7h12M26 7h11"/></svg>
<svg class="a" style="left:1250px;top:997px" width="40" height="14" fill="none" stroke="#ddd"><path d="M2 10l4-6 4 6"/><rect x="26.500" y="1.500" width="9" height="11" fill="#222" stroke="#eee" stroke-width="1.500"/><path d="M28 8h6" stroke="#eee"/></svg>

<!-- properties -->
<div class="tab" style="left:1304px;top:73px;width:55px">Properties</div>
<svg class="a" style="left:1342px;top:78px" width="11" height="11"><use href="#x"/></svg>
<svg class="a" style="left:1863px;top:76px" width="52" height="14"><use href="#pc"/></svg>
<div class="a" style="left:1304px;top:94px;width:606px;height:664px;background:#3e3f41"></div>
<div class="a" style="left:1910px;top:94px;width:10px;height:184px;background:#4a4a4a"></div>
<div class="a" style="left:1910px;top:278px;width:10px;height:480px;background:#333"></div>
<div class="l" style="top:102px">Type</div>
<div class="f" style="left:1564px;top:97px;width:316px;height:24px;background:#4f4f4f;border-color:#333;padding-left:15px;line-height:23px;color:#bbb">CusTextField</div>
<div class="l" style="top:129px">id</div>
<div class="f" style="left:1564px;top:125px;width:316px;height:22px;padding-left:3px">cusTextField</div>
<svg class="a" style="left:1885px;top:127px" width="19" height="19"><use href="#bk"/></svg>
<div class="l" style="top:155px">Custom id</div>
<div class="f" style="left:1564px;top:151px;width:316px;height:22px;text-align:center;font:11.5px/20px 'Liberation Sans',sans-serif;letter-spacing:0;color:#eee">Add Annotation</div>
<div class="p" style="top:177px">Geometry</div>
<div class="l" style="top:205px">Position</div>
<div class="l" style="top:231px">Size</div>
<div class="l" style="top:205px;left:1564px">X</div><div class="l" style="top:231px;left:1564px">W</div>
<div class="l" style="top:205px;left:1688px">Y</div><div class="l" style="top:231px;left:1688px">H</div>
<div class="sp bl" style="left:1601px;top:201px;width:75px"><i></i>76</div>
<div class="sp bl" style="left:1725px;top:201px;width:75px"><i></i>228</div>
<div class="sp bl" style="left:1601px;top:227px;width:75px"><i></i>120</div>
<div class="sp bl" style="left:1725px;top:227px;width:75px"><i></i>30</div>
<div class="p cl" style="top:253px">Visibility</div>
<div class="a" style="left:1304px;top:277px;width:606px;height:24px;background:#222"></div>
<div class="a" style="left:1910px;top:277px;width:10px;height:24px;background:#222"></div>
<div class="a m" style="left:1304px;top:277px;width:207px;height:24px;background:#e6e6e6;color:#222;text-align:center;font-size:11.5px;line-height:26px;letter-spacing:-.5px">CusTextField</div>
<div class="t m" style="left:1511px;top:277px;width:205px;text-align:center;font-size:11.5px;line-height:26px;letter-spacing:-.5px;color:#ddd">Layout</div>
<div class="t m" style="left:1717px;top:277px;width:205px;text-align:center;font-size:11.5px;line-height:26px;letter-spacing:-.5px;color:#ddd">Advanced</div>
<div class="a" style="left:1304px;top:301px;width:606px;height:4px;background:#e6e6e6"></div>

<div class="p" style="top:305px">selectionColor</div>
<div class="a" style="left:1310px;top:337px;border:4px solid transparent;border-left:5px solid #ccc;border-right:0"></div>
<div class="sw" style="top:329px"></div>
<div class="f" style="left:1367px;top:330px;width:484px;height:22px">#000000</div>
<div class="bb" style="top:329px"></div><div class="bs" style="top:329px"><svg width="16" height="16"><rect x=".5" y=".5" width="15" height="15" fill="#777" stroke="#321"/><path d="M2 14L14 2" stroke="#ddd" stroke-width="1.500"/></svg></div>

<div class="p" style="top:370px">selectedTextColor</div>
<div class="a" style="left:1310px;top:402px;border:4px solid transparent;border-left:5px solid #ccc;border-right:0"></div>
<div class="sw" style="top:394px"></div>
<div class="f" style="left:1367px;top:395px;width:484px;height:22px">#000000</div>
<div class="bb" style="top:394px"></div><div class="bs" style="top:394px"><svg width="16" height="16"><rect x=".5" y=".5" width="15" height="15" fill="#777" stroke="#321"/><path d="M2 14L14 2" stroke="#ddd" stroke-width="1.500"/></svg></div>

<div class="p" style="top:435px">font</div>
<div class="l" style="top:463px">Font</div>
<div class="f cb" style="left:1585px;top:459px;width:319px;height:22px">SimSun</div>
<div class="l" style="top:489px">Size</div>
<div class="sp bl" style="left:1585px;top:485px;width:74px"><i></i>16</div>
<div class="f cb" style="left:1665px;top:485px;width:239px;height:22px">pixels</div>
<div class="l" style="top:515px">Font style</div>
<div class="fs" style="left:1585px">B</div>
<div class="fs" style="left:1632px;font-style:italic">I</div>
<div class="fs" style="left:1679px;text-decoration:underline;font-weight:normal">U</div>
<div class="fs" style="left:1726px;text-decoration:line-through;font-weight:normal">S</div>
<div class="l" style="top:541px">Font capitalization</div>
<div class="f cb" style="left:1585px;top:537px;width:319px;height:22px">MixedCase</div>
<div class="l" style="top:567px">Font weight</div>
<div class="f cb" style="left:1585px;top:563px;width:319px;height:22px">Normal</div>
<div class="l" style="top:593px">Spacing</div>
<div class="sp" style="left:1585px;top:589px;width:97px"><i></i>0.00</div>
<div class="l" style="top:593px;left:1686px">Word</div>
<div class="sp" style="left:1761px;top:589px;width:97px"><i></i>0.00</div>
<div class="l" style="top:593px;left:1861px">Letter</div>

<div class="p" style="top:615px">color</div>
<div class="a" style="left:1309px;top:648px;border:4px solid transparent;border-top:5px solid #ccc;border-bottom:0"></div>
<div class="sw" style="top:639px;background:#f16464"></div>
<div class="f bl" style="left:1367px;top:640px;width:484px;height:22px">#f16464</div>
<div class="bb" style="top:639px"></div><div class="bs" style="top:639px"><svg width="16" height="16"><rect x=".5" y=".5" width="15" height="15" fill="#777" stroke="#321"/><path d="M2 14L14 2" stroke="#ddd" stroke-width="1.500"/></svg></div>

<div class="a" style="left:1313px;top:672px;width:122px;height:86px;overflow:hidden;background:linear-gradient(#fff,rgba(255,255,255,0) 50%,rgba(0,0,0,0) 50%,#000 100%),linear-gradient(90deg,#808080,#f00);background-size:100% 122px;border:1px solid #000;border-bottom:0"></div>
<div class="a" style="left:1414px;top:673px;width:1px;height:85px;background:rgba(255,255,255,.6)"></div>
<div class="a" style="left:1314px;top:712px;width:120px;height:1px;background:rgba(255,255,255,.6)"></div>
<div class="a" style="left:1439px;top:675px;width:8px;height:83px;background:linear-gradient(#f00,#ff0 17%,#0f0 33%,#0ff 50%,#00f 67%,#f0f 83%,#f00);background-size:100% 110px;background-repeat:no-repeat"></div>
<div class="a" style="left:1436px;top:675px;width:13px;height:10px;background:#4a3c35;border:1px solid #222;border-radius:2px"></div>
<div class="l" style="left:1464px;top:674px">R</div><div class="l" style="left:1464px;top:706px">G</div><div class="l" style="left:1464px;top:738px">B</div>
<div class="l" style="left:1559px;top:674px">H</div><div class="l" style="left:1559px;top:706px">S</div><div class="l" style="left:1559px;top:738px">L</div>
<div class="sp" style="left:1481px;top:671px;width:68px"><i></i>241</div>
<div class="sp" style="left:1481px;top:703px;width:68px"><i></i>100</div>
<div class="sp" style="left:1481px;top:735px;width:68px"><i></i>100</div>
<div class="sp" style="left:1576px;top:671px;width:64px"><i></i>0.00</div>
<div class="sp" style="left:1576px;top:703px;width:64px"><i></i>0.83</div>
<div class="sp" style="left:1576px;top:735px;width:64px"><i></i>0.67</div>

<!-- connection view -->
<div class="a" style="left:1304px;top:758px;width:616px;height:22px;background:#222"></div>
<div class="tab" style="left:1304px;top:758px;width:70px;line-height:23px">Connection View</div>
<svg class="a" style="left:1357px;top:763px" width="11" height="11"><use href="#x"/></svg>
<svg class="a" style="left:1863px;top:762px" width="52" height="14"><use href="#pc"/></svg>
<div class="a" style="left:1304px;top:780px;width:616px;height:22px;background:#3e3f41"></div>
<div class="tb" style="left:1304px;top:780px;width:92px;background:#ececec;color:#222">Connections</div>
<div class="tb" style="left:1396px;top:780px;width:92px">Bindings</div>
<div class="tb" style="left:1488px;top:780px;width:92px">Properties</div>
<div class="tb" style="left:1580px;top:780px;width:92px">Backends</div>
<div class="a" style="left:1304px;top:802px;width:616px;height:4px;background:#ececec"></div>
<div class="a" style="left:1304px;top:806px;width:616px;height:24px;background:#222"></div>
<svg class="a" style="left:1310px;top:811px" width="40" height="14" stroke-width="2"><path d="M7 1v12M1 7h12" stroke="#eee"/><path d="M25 7h12" stroke="#666"/></svg>
<div class="a" style="left:1304px;top:830px;width:616px;height:184px;background:#3e3f41"></div>
<div class="btn" style="left:1306px;top:832px;width:76px;height:28px">Target</div>
<div class="btn" style="left:1386px;top:832px;width:156px;height:28px">Signal Handler</div>
<div class="btn" style="left:1546px;top:832px;width:372px;height:28px">Action</div>

<!-- status bar -->
<div class="a" style="left:71px;top:1014px;width:1849px;height:26px;background:#222"></div>
<svg class="a" style="left:79px;top:1020px" width="12" height="13"><rect x=".5" y=".5" width="10" height="11" fill="none" stroke="#bbb"/><rect x="1" y="1" width="4" height="10" fill="#bbb"/></svg>
<div class="a" style="left:103px;top:1017px;width:206px;height:21px;background:#3a3a3a"></div>
<svg class="a" style="left:109px;top:1020px" width="15" height="15" fill="none" stroke="#aaa" stroke-width="1.200"><circle cx="9" cy="6" r="4.500"/><path d="M6 9.500l-4 5"/></svg>
<div class="t" style="left:130px;top:1019px;font-size:13px;line-height:17px;color:#8a8a8a">Type to locate (Ctrl+K)</div>
<div class="vs" style="left:313px;top:1017px;height:21px;background:#444"></div>
<div class="a" style="left:501px;top:1017px;width:46px;height:23px;background:#1f5c9e"></div>
<div class="st" style="left:323px">1</div><div class="st" style="left:336px">问题</div>
<div class="st" style="left:367px">2</div><div class="st" style="left:379px">Search Results</div>
<div class="st" style="left:440px">3</div><div class="st" style="left:452px">应用程序输出</div>
<div class="st" style="left:508px">4</div><div class="st" style="left:519px;color:#eee">编译输出</div>
<div class="st" style="left:561px">5</div><div class="st" style="left:573px">QML Debugger Console</div>
<div class="st" style="left:653px">6</div><div class="st" style="left:665px">概要信息</div>
<div class="st" style="left:708px">7</div><div class="st" style="left:720px">Version Control</div>
<div class="st" style="left:784px">8</div><div class="st" style="left:796px">Test Results</div>
<svg class="a" style="left:850px;top:1020px" width="10" height="14"><use href="#ud"/></svg>
<div class="a" style="left:1866px;top:1017px;width:23px;height:23px;background:#1f5c9e"></div>
<svg class="a" style="left:1870px;top:1019px" width="16" height="18"><path d="M8 1l2 3H6z" fill="#ddd"/><rect x="1" y="8" width="14" height="6" fill="#ddd"/><path d="M4 11h5" stroke="#1f5c9e"/></svg>
<svg class="a" style="left:1902px;top:1021px" width="10" height="14"><rect x=".5" y=".5" width="8" height="13" fill="none" stroke="#bbb"/><rect x="5" y="1" width="3" height="12" fill="#bbb"/></svg>
</body></html>
